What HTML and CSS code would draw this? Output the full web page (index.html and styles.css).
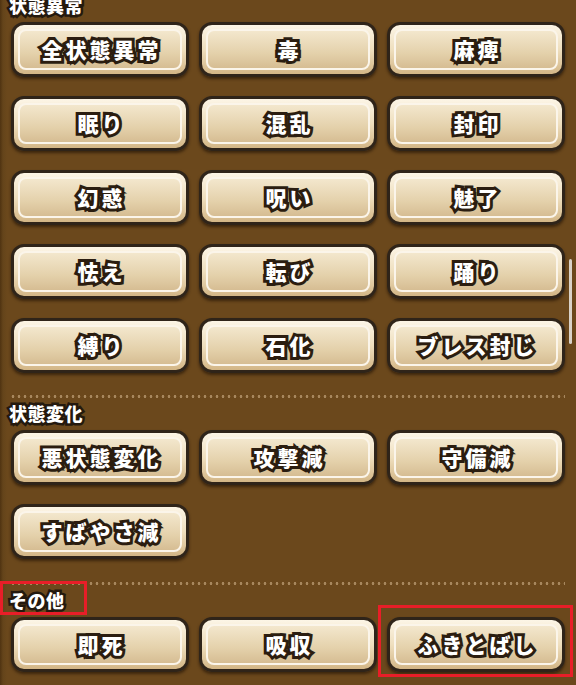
FILE: index.html
```html
<!DOCTYPE html>
<html lang="ja">
<head>
<meta charset="utf-8">
<link rel="stylesheet" href="styles.css">
</head>
<body>
<div class="page">
  <section class="sec sec-first">
    <div class="title"><span class="label">状態異常</span></div>
    <div class="grid">
      <div class="btn"><span>全状態異常</span></div>
      <div class="btn"><span>毒</span></div>
      <div class="btn"><span>麻痺</span></div>
      <div class="btn"><span>眠り</span></div>
      <div class="btn"><span>混乱</span></div>
      <div class="btn"><span>封印</span></div>
      <div class="btn"><span>幻惑</span></div>
      <div class="btn"><span>呪い</span></div>
      <div class="btn"><span>魅了</span></div>
      <div class="btn"><span>怯え</span></div>
      <div class="btn"><span>転び</span></div>
      <div class="btn"><span>踊り</span></div>
      <div class="btn"><span>縛り</span></div>
      <div class="btn"><span>石化</span></div>
      <div class="btn"><span>ブレス封じ</span></div>
    </div>
  </section>
  <div class="dots"></div>
  <section class="sec">
    <div class="title"><span class="label">状態変化</span></div>
    <div class="grid">
      <div class="btn"><span>悪状態変化</span></div>
      <div class="btn"><span>攻撃減</span></div>
      <div class="btn"><span>守備減</span></div>
      <div class="btn"><span>すばやさ減</span></div>
    </div>
  </section>
  <div class="dots dots-last"></div>
  <section class="sec">
    <div class="title"><span class="label">その他</span><span class="mark mark-title"></span></div>
    <div class="grid">
      <div class="btn"><span>即死</span></div>
      <div class="btn"><span>吸収</span></div>
      <div class="btn"><span>ふきとばし</span><span class="mark mark-btn"></span></div>
    </div>
  </section>
</div>
<div class="scrollbar"></div>
</body>
</html>
```
FILE: styles.css
```css
html, body {
  margin: 0;
  padding: 0;
}
body {
  width: 576px;
  height: 685px;
  overflow: hidden;
  background: linear-gradient(to right, #4f3311 0, #64441a 3px, #6b481c 7px, #6b481c 100%);
  font-family: "Noto Sans CJK JP", "Noto Sans", sans-serif;
  position: relative;
}
.page {
  padding: 0 11px;
}
.title {
  position: relative;
  height: 22px;
  line-height: 22px;
  margin: 4px 0 6px -2px;
}
.sec-first .title {
  margin-top: -6px;
}
.label {
  font-size: 18px;
  font-weight: 900;
  color: #fff;
  letter-spacing: 0.5px;
  -webkit-text-stroke: 5px #24190e;
  paint-order: stroke fill;
}
.grid {
  display: grid;
  grid-template-columns: repeat(3, 178px);
  column-gap: 10px;
  row-gap: 19px;
}
.btn {
  position: relative;
  box-sizing: border-box;
  height: 55px;
  border: 3px solid #2f2419;
  border-radius: 13px;
  background: linear-gradient(#fcf5e6, #efdfbe 50%, #d3b686);
  box-shadow: 0 2px 3px rgba(20, 10, 0, 0.55);
  display: flex;
  align-items: center;
  justify-content: center;
}
.btn::before {
  content: "";
  position: absolute;
  inset: 4px;
  border: 2px solid #fbf5ea;
  border-radius: 8px;
  background: linear-gradient(#f3e7cd, #e4d1ab 60%, #d6bd93);
}
.btn > span:first-child {
  position: relative;
  font-size: 21px;
  font-weight: 900;
  color: #fff;
  letter-spacing: 3px;
  margin-right: -3px;
  line-height: 1;
  -webkit-text-stroke: 6px #2b1d10;
  paint-order: stroke fill;
}
.dots {
  height: 3px;
  margin: 22px 0 0 -1px;
  background-image: radial-gradient(circle, #a7875d 1.2px, transparent 1.6px);
  background-size: 6px 3px;
  background-position: 0 0;
}
.dots-last {
  margin-top: 23px;
}
.mark {
  position: absolute;
  border: 3px solid #e81e28;
  pointer-events: none;
}
.mark-title {
  left: -9px;
  top: -8px;
  width: 81px;
  height: 28px;
}
.mark-btn {
  left: -12px;
  top: -15px;
  width: 189px;
  height: 66px;
}
.scrollbar {
  position: absolute;
  left: 569px;
  top: 259px;
  width: 3px;
  height: 85px;
  border-radius: 2px;
  background: #d9d2c8;
}
```
